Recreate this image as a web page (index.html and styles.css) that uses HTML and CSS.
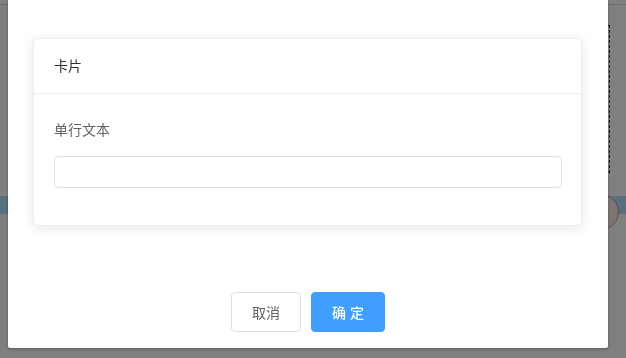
FILE: index.html
```html
<!DOCTYPE html>
<html lang="zh-CN">
<head>
    <meta charset="UTF-8">
    <meta name="viewport" content="width=device-width, initial-scale=1.0">
    <title>卡片</title>
    <link rel="stylesheet" href="styles.css">
</head>
<body>
    <!-- Page behind the mask -->
    <div class="page">
        <div class="page-line"></div>
        <div class="drop-zone"></div>
        <div class="toolbar">
            <span class="avatar"></span>
        </div>
    </div>

    <!-- Dialog -->
    <div class="mask"></div>
    <div class="dialog">
        <div class="dialog-body">
            <div class="card">
                <div class="card-header">卡片</div>
                <div class="card-body">
                    <div class="form-item">
                        <label class="form-label" for="single-line">单行文本</label>
                        <input class="form-input" id="single-line" type="text">
                    </div>
                </div>
            </div>
        </div>
        <div class="dialog-footer">
            <button class="btn">取消</button>
            <button class="btn btn-primary">确 定</button>
        </div>
    </div>
</body>
</html>
```

FILE: styles.css
```css
* {
    box-sizing: border-box;
}
html, body {
    margin: 0;
    height: 100%;
}
body {
    font-family: "Helvetica Neue", Arial, "Noto Sans CJK SC", sans-serif;
    font-size: 14px;
    background-color: #fff;
    overflow: hidden;
}
.page {
    padding-top: 4px;
}
.page-line {
    height: 1px;
    background-color: #dcdfe6;
}
.drop-zone {
    width: 80px;
    height: 148px;
    margin: 20px 0 0 auto;
    margin-right: 16px;
    border: 1px dashed #333;
    border-left: none;
}
.toolbar {
    position: relative;
    height: 18px;
    margin-top: 23px;
    background-color: #b0e2ff;
}
.avatar {
    position: absolute;
    left: 583px;
    top: -2px;
    width: 36px;
    height: 36px;
    border-radius: 50%;
    border: 1px solid #d08a8a;
    background-color: #fde8e8;
}
.mask {
    position: fixed;
    top: 0;
    left: 0;
    right: 0;
    bottom: 0;
    background-color: rgba(0, 0, 0, 0.5);
}
.dialog {
    position: fixed;
    top: 0;
    left: 8px;
    width: 600px;
    height: 348px;
    background-color: #fff;
    border-radius: 0 0 2px 2px;
    box-shadow: 0 1px 3px rgba(0, 0, 0, 0.3);
    display: flex;
    flex-direction: column;
}
.dialog-body {
    padding: 38px 26px 0 25px;
}
.card {
    border: 1px solid #ebeef5;
    border-radius: 4px;
    background-color: #fff;
    box-shadow: 0 2px 12px 0 rgba(0, 0, 0, 0.1);
    color: #303133;
}
.card-header {
    padding: 18px 20px;
    line-height: 18px;
    border-bottom: 1px solid #ebeef5;
}
.card-body {
    padding: 20px 19px 37px 20px;
}
.form-label {
    display: block;
    line-height: 32px;
    margin-bottom: 10px;
    color: #606266;
}
.form-input {
    display: block;
    width: 100%;
    height: 32px;
    padding: 0 15px;
    border: 1px solid #dcdfe6;
    border-radius: 4px;
    font-size: 13px;
    color: #606266;
    outline: none;
}
.dialog-footer {
    margin-top: auto;
    padding: 0 20px 16px;
    display: flex;
    justify-content: center;
    gap: 10px;
}
.btn {
    height: 40px;
    padding: 0 20px;
    font-family: inherit;
    font-size: 14px;
    color: #606266;
    background-color: #fff;
    border: 1px solid #dcdfe6;
    border-radius: 4px;
    cursor: pointer;
}
.btn-primary {
    color: #fff;
    font-weight: 500;
    background-color: #409eff;
    border-color: #409eff;
}
```
